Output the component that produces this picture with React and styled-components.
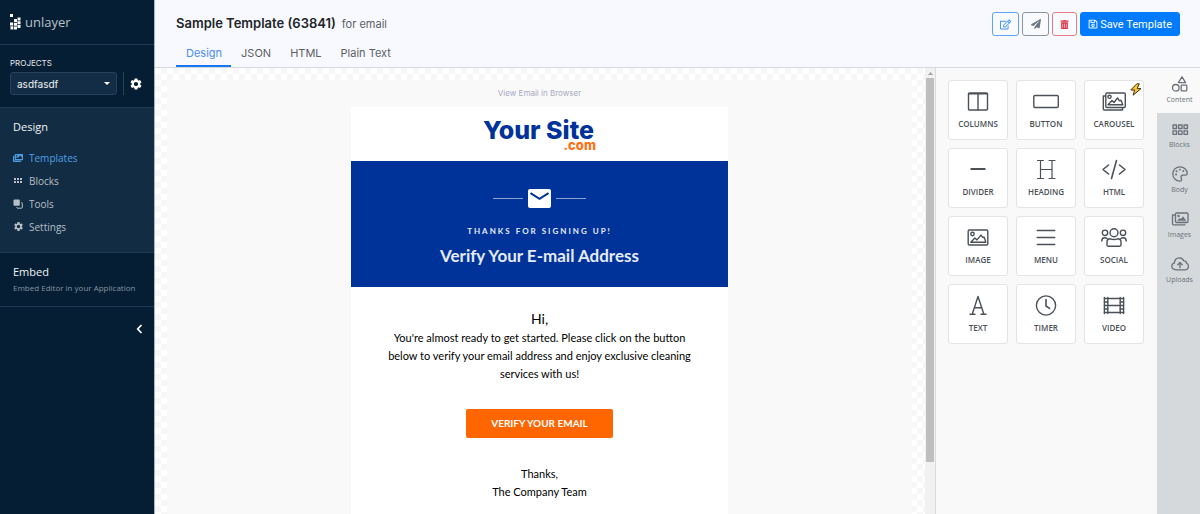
import React from "react";
import styled, { createGlobalStyle, css } from "styled-components";
import { FaRegEdit, FaPaperPlane, FaTrashAlt, FaRegSave, FaImages } from "react-icons/fa";
import { MdSettings } from "react-icons/md";

const GlobalStyle = createGlobalStyle`
  *, *::before, *::after { box-sizing: border-box; }
  body { margin: 0; font-family: "Inter", "Liberation Sans", sans-serif; font-size: 11px; }
  h1, h2, h3, p, ul { margin: 0; padding: 0; font-weight: inherit; }
  ul { list-style: none; }
  button, select { font: inherit; }
  button { cursor: pointer; }
  a { color: inherit; text-decoration: none; }
  svg { display: block; flex: none; }
`;

const Shell = styled.div`
  display: flex;
  height: 100vh;
  overflow: hidden;
`;

/* Sidebar */

const Sidebar = styled.aside`
  display: flex;
  flex-direction: column;
  flex: 0 0 155px;
  background: #051e34;
  color: #fff;
  border-right: 1px solid #a9b3c2;
  font-family: "Open Sans", sans-serif;
`;

const Brand = styled.a`
  display: flex;
  align-items: center;
  gap: 4px;
  height: 45px;
  padding: 0 10px;
  border-bottom: 1px solid #1e3a54;
  color: #b9c1ca;
  font-size: 13px;
`;

const Projects = styled.div`
  display: flex;
  flex-direction: column;
  gap: 1px;
  height: 63px;
  padding: 10px 10px 0;
  border-bottom: 1px solid #1e3a54;
`;

const ProjectsLabel = styled.label`
  font-family: "Inter", sans-serif;
  font-size: 8px;
  line-height: 16px;
  color: #e3e7ea;
`;

const ProjectRow = styled.div`
  display: flex;
  align-items: center;
`;

const SelectWrap = styled.div`
  display: grid;
  align-items: center;
  width: 107px;
  & > * { grid-area: 1 / 1; }
  & > svg { justify-self: end; margin-right: 7px; pointer-events: none; }
`;

const ProjectSelect = styled.select`
  appearance: none;
  width: 100%;
  height: 23px;
  padding: 0 6px;
  border: 1px solid #26415a;
  border-radius: 3px;
  background: #122d45;
  color: #f1f3f5;
  font-family: "Inter", sans-serif;
  font-size: 10px;
`;

const PlainButton = styled.button`
  display: flex;
  align-items: center;
  justify-content: center;
  padding: 0;
  border: 0;
  background: none;
  color: #fff;
`;

const GearButton = styled(PlainButton)`
  height: 23px;
  margin-left: 6px;
  padding-left: 5px;
  border-left: 1px solid #26415a;
`;

const DesignSection = styled.nav`
  height: 145px;
  padding: 9px 13px 0;
  background: #122d43;
  border-bottom: 1px solid #1e3a54;
`;

const SectionTitle = styled.h2`
  font-size: 11px;
  line-height: 20px;
  color: #f1f3f5;
`;

const NavList = styled.ul`
  margin-top: 9px;
`;

const NavLink = styled.a`
  display: flex;
  align-items: center;
  gap: 6px;
  height: 23px;
  font-size: 10px;
  color: ${(p) => (p.$active ? "#4f9fe6" : "#b7bfc7")};
`;

const NavIcon = styled.span`
  display: flex;
  justify-content: center;
  width: 10px;
`;

const EmbedSection = styled.a`
  display: block;
  height: 54px;
  padding: 9px 13px 0;
  border-bottom: 1px solid #1e3a54;
`;

const EmbedNote = styled.p`
  font-size: 8px;
  line-height: 12px;
  white-space: nowrap;
  color: #8593a1;
`;

const CollapseButton = styled(PlainButton)`
  align-self: flex-end;
  margin: 15px 10px 0 0;
  width: 10px;
  height: 14px;
`;

/* Header */

const Main = styled.main`
  display: flex;
  flex-direction: column;
  flex: 1;
  min-width: 0;
`;

const Header = styled.header`
  display: flex;
  justify-content: space-between;
  height: 68px;
  padding: 12px 20px 0 21px;
  background: #f8f9fe;
  border-bottom: 1px solid #d5d9dd;
`;

const HeaderLeft = styled.div`
  display: flex;
  flex-direction: column;
  justify-content: space-between;
`;

const TitleRow = styled.div`
  display: flex;
  align-items: baseline;
  gap: 6px;
  line-height: 22px;
  color: #5b6066;
`;

const Title = styled.h1`
  font-size: 13px;
  font-weight: 600;
  color: #212529;
`;

const Tabs = styled.nav`
  display: flex;
`;

const Tab = styled.a`
  padding: 0 9px 0 10px;
  height: 27px;
  line-height: 26px;
  color: ${(p) => (p.$active ? "#4a8ff0" : "#5b6066")};
  border-bottom: 2px solid ${(p) => (p.$active ? "#1877f2" : "transparent")};
`;

const Actions = styled.div`
  display: flex;
  gap: 3px;
`;

const tones = {
  blue: { ink: "#3b93f7", edge: "#5aa5f8" },
  gray: { ink: "#6c757d", edge: "#8d949b" },
  red: { ink: "#dc3545", edge: "#e77a87" },
};

const ActionButton = styled.button`
  display: flex;
  align-items: center;
  justify-content: center;
  gap: 2px;
  height: 24px;
  min-width: ${(p) => (p.$tone === "red" ? 25 : 27)}px;
  padding: 0 7px;
  border: 1px solid ${(p) => tones[p.$tone].edge};
  border-radius: 3px;
  background: #f9fafe;
  color: ${(p) => tones[p.$tone].ink};
  ${(p) =>
    p.$primary &&
    css`
      border-color: #007bff;
      background: #007bff;
      color: #fff;
      font-family: "Roboto", sans-serif;
    `}
`;

/* Canvas */

const Workspace = styled.div`
  display: flex;
  flex: 1;
  min-height: 0;
`;

const Canvas = styled.section`
  flex: 1;
  min-width: 0;
  padding: 12px 13px 0 12px;
  overflow: hidden;
  background: repeating-conic-gradient(#f7f7f7 0 25%, #fff 0 50%) 0 0 / 12px 12px;
`;

const EmailBody = styled.div`
  display: flex;
  flex-direction: column;
  align-items: center;
  min-height: 100%;
  background: #f9f9f9;
  font-family: "Lato", sans-serif;
`;

const BrowserLink = styled.a`
  line-height: 27px;
  font-family: "Inter", sans-serif;
  font-size: 8px;
  color: #a9aac2;
`;

const Email = styled.article`
  display: flex;
  flex-direction: column;
  width: 377px;
  min-height: 480px;
  max-width: 100%;
  background: #fff;
  text-align: center;
  color: #000;
`;

const SiteLogo = styled.div`
  display: flex;
  flex-direction: column;
  align-items: flex-end;
  align-self: center;
  height: 54px;
  padding-top: 12px;
  font-family: "Inter", sans-serif;
  font-weight: 800;
`;

const SiteName = styled.span`
  padding-right: 2px;
  font-size: 25px;
  line-height: 22px;
  color: #003399;
`;

const SiteSuffix = styled.span`
  font-size: 13px;
  line-height: 8px;
  color: #ff6f0f;
`;

const Banner = styled.div`
  display: flex;
  flex-direction: column;
  align-items: center;
  height: 126px;
  padding-top: 23px;
  background: #003399;
  color: #e5eaf5;
`;

const MailMark = styled.div`
  display: flex;
  align-items: center;
  gap: 2px;
`;

const Rule = styled.span`
  width: 30px;
  height: 1px;
  background: #8ba3d0;
`;

const Kicker = styled.p`
  margin-top: 11px;
  font-size: 8px;
  font-weight: 700;
  line-height: 16px;
  letter-spacing: 2px;
`;

const BannerTitle = styled.h2`
  margin-top: 4px;
  font-size: 17px;
  font-weight: 700;
  line-height: 26px;
`;

const Greeting = styled.p`
  padding-top: 22px;
  font-size: 14px;
  line-height: 20px;
`;

const Copy = styled.p`
  padding: 0 36px;
  line-height: 18px;
`;

const VerifyButton = styled.a`
  align-self: center;
  width: 147px;
  margin: 26px 0 27px;
  border-radius: 2px;
  background: #ff6600;
  color: #fff;
  font-size: 10px;
  font-weight: 700;
  line-height: 29px;
`;

const ScrollTrack = styled.div`
  display: flex;
  flex-direction: column;
  flex: 0 0 11px;
  padding: 0 1px 0 1px;
  background: #f1f1f1;
  border-right: 1px solid #d9dcdf;
`;

const ScrollArrow = styled.span`
  display: flex;
  align-items: center;
  justify-content: center;
  height: 10px;
`;

const ScrollThumb = styled.span`
  flex: 0 0 86%;
  background: #bfbfbf;
`;

/* Tool panel */

const ToolPanel = styled.section`
  flex: 0 0 221px;
  padding: 12px;
  background: #f9f9f9;
  font-family: "Open Sans", sans-serif;
`;

const ToolGrid = styled.div`
  display: grid;
  grid-template-columns: repeat(3, 60px);
  grid-auto-rows: 60px;
  gap: 8px;
`;

const Tool = styled.button`
  position: relative;
  display: flex;
  flex-direction: column;
  align-items: center;
  gap: 2px;
  padding: 7px 0 0;
  border: 1px solid #e3e4e5;
  border-radius: 3px;
  background: #fff;
  color: #4b5157;
  font-size: 8px;
  font-weight: 600;
  line-height: 16px;
`;

const Badge = styled.span`
  position: absolute;
  top: 2px;
  right: 1px;
`;

const SideTabs = styled.nav`
  display: flex;
  flex-direction: column;
  flex: 0 0 43px;
  background: #d5d9dc;
  font-family: "Open Sans", sans-serif;
`;

const SideTab = styled.a`
  display: flex;
  flex-direction: column;
  align-items: center;
  height: 45px;
  padding: 7px 0 0 2px;
  font-size: 7px;
  line-height: 13px;
  color: #6b7178;
  background: ${(p) => (p.$active ? "#f9f9f9" : "transparent")};
`;

const Line = ({ w = 26, h = 26, s = 1.4, children }) => (
  <svg width={w} height={h} viewBox={`0 0 ${w} ${h}`} fill="none" stroke="currentColor" strokeWidth={s} strokeLinejoin="round" strokeLinecap="round" aria-hidden="true">
    {children}
  </svg>
);

const toolIcons = {
  COLUMNS: <><rect x="3.5" y="5" width="19" height="17" rx="1" /><path d="M3.5 5.8h19M13 6v16" /></>,
  BUTTON: <rect x="0.8" y="7.5" width="24.5" height="12" rx="1.2" />,
  CAROUSEL: <><rect x="4.8" y="5" width="19.5" height="14.5" rx="1.2" /><path d="M4.500 8H2.300v12.800q0 1.200 1.200 1.200H21.500v-2.300M7 16.800l4-4.200 2 2 3.500-4.600 2 2.800 1.500-.6 1.800 4.600z" /><circle cx="8.500" cy="8.800" r="1.600" /></>,
  DIVIDER: <path d="M5.500 13h15" strokeWidth="2" strokeLinecap="butt" />,
  HEADING: <path d="M4.500 4.500h6M16 4.500h6M4.500 22.500h6M16 22.500h6M7.500 5v17M19 5v17M7.500 13.500H19" strokeWidth="1.200" />,
  HTML: <path d="M7.500 9l-5.500 4.500 5.500 4.500M18.500 9l5.500 4.500-5.500 4.500M15.500 4.500l-5 18" strokeWidth="1.600" />,
  IMAGE: <><rect x="3.200" y="6" width="19.600" height="15" rx="1.200" /><path d="M5.800 18.200l4-4.200 2.200 1.900 4-4.800 2 2.400 1.200-.4 1.600 5.100z" /><circle cx="7.500" cy="10" r="1.700" /></>,
  MENU: <path d="M4.300 6.500h17.400M4.300 13.500h17.400M4.300 20.500h17.400" />,
  SOCIAL: <><circle cx="13" cy="8.800" r="4" /><circle cx="4" cy="8.800" r="2.700" /><circle cx="22" cy="8.800" r="2.700" /><path d="M6 21.500v-3.500q0-3.200 3.400-3.200 3.600 1.500 7.200 0 3.400 0 3.400 3.200v3.500q-.3.700-1.300.7H7.300q-1 0-1.300-.700zM.8 17q0-3.300 2.700-3.300 1.700 0 2.600.8M25.200 17q0-3.300-2.700-3.300-1.700 0-2.600.8" /></>,
  TEXT: <path d="M5 22.300h5M16 22.300h5M7.300 22l5.700-17.500L18.800 22M9.300 15.800h7.500" />,
  TIMER: <><circle cx="13" cy="13.500" r="9.600" /><path d="M13 7.500v6.500l3.600 2.400" strokeWidth="1.600" /></>,
  VIDEO: <><path d="M3.400 5.500v16M6.800 5.500v16M19.200 5.500v16M22.600 5.500v16M6.800 6.500h12.400M6.800 13.500h12.400M6.800 20.500h12.400" /><path d="M3.400 6.500h3.400M3.400 10h3.400M3.400 13.500h3.400M3.400 17h3.400M3.400 20.500h3.400M19.200 6.500h3.400M19.200 10h3.400M19.200 13.500h3.400M19.200 17h3.400M19.200 20.500h3.400" /></>,
};

const sideIcons = {
  Content: <><path d="M11 1.800l3.600 5.800H7.400z" /><circle cx="4.800" cy="12.800" r="3.300" /><rect x="10.200" y="10.200" width="5.600" height="5.600" rx=".5" /></>,
  Blocks: <>{[2, 7.500, 13].map((x) => [5, 10.800].map((y) => <rect key={`${x}-${y}`} x={x} y={y} width="3.500" height="3.500" />))}</>,
  Body: <><path d="M9 1.800C4.900 1.800 1.800 5 1.800 8.900c0 4 3.200 7.200 7 7.200 1.700 0 2.200-1.400 1.500-2.700-.9-1.700.1-3.200 1.700-3.200h2.600c1 0 1.600-.7 1.600-1.700C16.200 4.600 13 1.800 9 1.800z" /><path d="M5 9.500h.1M5.500 6.200h.1M8.800 4.600h.1M12.300 6h.1" strokeWidth="1.900" /></>,
  Images: <><rect x="4.500" y="3" width="12.500" height="9.500" rx="1" /><path d="M3.500 5H1.500v8.800q0 1 1 1H14" /><path d="M6.800 10.500l2-2.200 1.200 1 2-2.600 2.700 3.800z" fill="currentColor" strokeWidth=".6" /><circle cx="7.500" cy="6" r=".6" /></>,
  Uploads: <path d="M5 14.800C2.500 14.800.8 13.400.8 11.200c0-1.800 1.200-2.900 2.600-3.300C3.400 5 5.400 2.800 8.200 2.800c2.200 0 3.900 1.200 4.500 3 1.800 0 2.900 1 3 2.600 1 .4 1.700 1.400 1.700 2.800 0 2.200-1.500 3.600-3.600 3.600zM9 12.800V7.800M6.800 9.700L9 7.500l2.200 2.200" />,
};

const BlocksGlyph = () => (
  <svg width="8" height="7" viewBox="0 0 8 7" fill="currentColor" aria-hidden="true">
    <path d="M0 1h2v2H0zM3 1h2v2H3zM6 1h2v2H6zM0 4h2v2H0zM3 4h2v2H3zM6 4h2v2H6z" />
  </svg>
);

const ToolsGlyph = () => (
  <svg width="10" height="10" viewBox="0 0 10 10" aria-hidden="true">
    <rect x=".5" y=".5" width="6.300" height="6.300" rx="1" fill="currentColor" />
    <path d="M8 3.700h.7q.6 0 .6.600v4.200q0 .700-.700.700H4.500q-.700 0-.700-.700V8" fill="none" stroke="currentColor" />
  </svg>
);

const navItems = [
  { label: "Templates", icon: <FaImages size={10} />, active: true },
  { label: "Blocks", icon: <BlocksGlyph /> },
  { label: "Tools", icon: <ToolsGlyph /> },
  { label: "Settings", icon: <MdSettings size={11} /> },
];

export default function App() {
  return (
    <Shell>
      <GlobalStyle />
      <Sidebar>
        <Brand href="#">
          <svg width="11" height="16" viewBox="0 0 11 16" fill="#fff" aria-hidden="true">
            <path d="M0 0h3v3H0zM7.500 3.500h3v3h-3zM4 5h3v3H4zM0 8.500h3v3H0zM3.800 8.800h3.200v3H3.800zM7.500 7.200h3v3h-3zM.5 12.200h2.800v3.300H.5zM4 12.500h3v3H4zM7.500 11h3v3h-3z" />
          </svg>
          unlayer
        </Brand>
        <Projects>
          <ProjectsLabel htmlFor="project">PROJECTS</ProjectsLabel>
          <ProjectRow>
            <SelectWrap>
              <ProjectSelect id="project" defaultValue="asdfasdf">
                <option>asdfasdf</option>
              </ProjectSelect>
              <svg width="6" height="3" viewBox="0 0 6 3" fill="#fff" aria-hidden="true"><path d="M0 0h6L3 3z" /></svg>
            </SelectWrap>
            <GearButton aria-label="Project settings"><MdSettings size={14} /></GearButton>
          </ProjectRow>
        </Projects>
        <DesignSection>
          <SectionTitle>Design</SectionTitle>
          <NavList>
            {navItems.map((item) => (
              <li key={item.label}>
                <NavLink href="#" $active={item.active}>
                  <NavIcon>{item.icon}</NavIcon>
                  {item.label}
                </NavLink>
              </li>
            ))}
          </NavList>
        </DesignSection>
        <EmbedSection href="#">
          <SectionTitle>Embed</SectionTitle>
          <EmbedNote>Embed Editor in your Application</EmbedNote>
        </EmbedSection>
        <CollapseButton aria-label="Collapse sidebar">
          <svg width="7" height="10" viewBox="0 0 7 10" fill="none" stroke="#fff" strokeWidth="1.700"><path d="M5.500 1L1.700 5l3.800 4" /></svg>
        </CollapseButton>
      </Sidebar>

      <Main>
        <Header>
          <HeaderLeft>
            <TitleRow>
              <Title>Sample Template (63841)</Title>
              <span>for email</span>
            </TitleRow>
            <Tabs>
              {["Design", "JSON", "HTML", "Plain Text"].map((t, i) => (
                <Tab key={t} href="#" $active={i === 0}>{t}</Tab>
              ))}
            </Tabs>
          </HeaderLeft>
          <Actions>
            <ActionButton $tone="blue" aria-label="Edit"><FaRegEdit size={11} /></ActionButton>
            <ActionButton $tone="gray" aria-label="Send"><FaPaperPlane size={10} /></ActionButton>
            <ActionButton $tone="red" aria-label="Delete"><FaTrashAlt size={9} /></ActionButton>
            <ActionButton $tone="blue" $primary><FaRegSave size={10} />Save Template</ActionButton>
          </Actions>
        </Header>

        <Workspace>
          <Canvas>
            <EmailBody>
              <BrowserLink href="#">View Email in Browser</BrowserLink>
              <Email>
                <SiteLogo>
                  <SiteName>Your Site</SiteName>
                  <SiteSuffix>.com</SiteSuffix>
                </SiteLogo>
                <Banner>
                  <MailMark>
                    <Rule />
                    <svg width="29" height="28" viewBox="0 0 29 28" aria-hidden="true">
                      <rect x="3" y="5" width="23" height="19" rx="2" fill="#fff" />
                      <path d="M5.500 9.200l9 5.600 9-5.600" fill="none" stroke="#003399" strokeWidth="2" />
                    </svg>
                    <Rule />
                  </MailMark>
                  <Kicker>THANKS FOR SIGNING UP!</Kicker>
                  <BannerTitle>Verify Your E-mail Address</BannerTitle>
                </Banner>
                <Greeting>Hi,</Greeting>
                <Copy>
                  You're almost ready to get started. Please click on the button below to verify your email
                  address and enjoy exclusive cleaning services with us!
                </Copy>
                <VerifyButton href="#">VERIFY YOUR EMAIL</VerifyButton>
                <Copy>Thanks,</Copy>
                <Copy>The Company Team</Copy>
              </Email>
            </EmailBody>
          </Canvas>
          <ScrollTrack>
            <ScrollArrow>
              <svg width="5" height="3" viewBox="0 0 5 3" fill="#a3a3a3" aria-hidden="true"><path d="M0 3l2.500-3L5 3z" /></svg>
            </ScrollArrow>
            <ScrollThumb />
          </ScrollTrack>
          <ToolPanel>
            <ToolGrid>
              {Object.entries(toolIcons).map(([name, icon]) => (
                <Tool key={name}>
                  <Line>{icon}</Line>
                  {name}
                  {name === "CAROUSEL" && (
                    <Badge>
                      <svg width="12" height="13" viewBox="0 0 12 13" aria-hidden="true">
                        <path d="M6.800.8L.8 7h3.800L3.200 12.200 11 5.600H7.200L9.300.8z" fill="#fcc42d" stroke="#3d3414" />
                      </svg>
                    </Badge>
                  )}
                </Tool>
              ))}
            </ToolGrid>
          </ToolPanel>
          <SideTabs>
            {Object.entries(sideIcons).map(([name, icon], i) => (
              <SideTab key={name} href="#" $active={i === 0}>
                <Line w={18} h={18} s={1.3}>{icon}</Line>
                {name}
              </SideTab>
            ))}
          </SideTabs>
        </Workspace>
      </Main>
    </Shell>
  );
}
